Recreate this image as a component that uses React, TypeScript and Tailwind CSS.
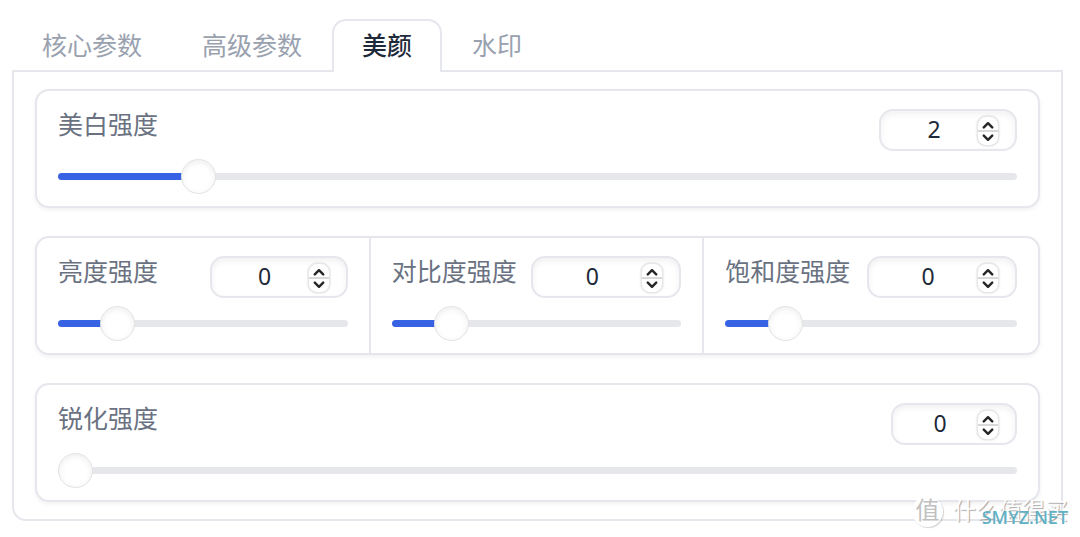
import { useState } from "react";

type ParamProps = {
  id: string;
  label: string;
  min: number;
  max: number;
  initial: number;
  boxClass: string;
};

function Chevron({ down = false }: { down?: boolean }) {
  return (
    <svg viewBox="0 0 12 8" className="h-2 w-3" fill="none" stroke="#262626" strokeWidth="2.4" strokeLinecap="round" strokeLinejoin="round" aria-hidden="true">
      <path d={down ? "M1.8 1.6 6 5.8l4.2-4.2" : "M1.8 6.4 6 2.2l4.2 4.2"} />
    </svg>
  );
}

function Param({ id, label, min, max, initial, boxClass }: ParamProps) {
  const [value, setValue] = useState(initial);
  const set = (next: number) => setValue(Math.min(max, Math.max(min, next)));
  const ratio = (value - min) / (max - min);

  return (
    <div className="min-w-0 px-[21px] pt-[18px] pb-[26px]">
      <div className="flex items-start justify-between">
        <label htmlFor={id} className="text-[25px] leading-7 whitespace-nowrap text-gray-500">
          {label}
        </label>
        <div className={`flex h-[42px] items-center rounded-[14px] border-2 border-[#e6e7ed] bg-white pt-0.5 pr-4 pl-2.5 shadow-[inset_0_3px_6px_rgba(0,0,0,0.06)] ${boxClass}`}>
          <input
            id={id}
            type="number"
            min={min}
            max={max}
            value={value}
            onChange={(e) => set(Number(e.target.value))}
            className="w-0 flex-1 appearance-none bg-transparent pb-1 text-center font-['Noto_Sans',sans-serif] text-[23px] leading-8 text-gray-800 outline-none [-moz-appearance:textfield] [&::-webkit-inner-spin-button]:appearance-none"
          />
          <div className="flex h-[30px] w-[22px] flex-col overflow-hidden rounded-[9px] border border-gray-200 bg-white shadow-[0_0_2px_rgba(0,0,0,0.22)]">
            <button type="button" aria-label={`${label} +`} onClick={() => set(value + 1)} className="flex flex-1 items-center justify-center border-b-2 border-[#d9d9d9] pt-0.5">
              <Chevron />
            </button>
            <button type="button" aria-label={`${label} -`} onClick={() => set(value - 1)} className="flex flex-1 items-center justify-center pb-0.5">
              <Chevron down />
            </button>
          </div>
        </div>
      </div>
      <input
        type="range"
        aria-label={label}
        min={min}
        max={max}
        value={value}
        onChange={(e) => set(Number(e.target.value))}
        style={{
          backgroundImage: `linear-gradient(to right, #3662e3 ${ratio * 100}%, #e5e7eb ${ratio * 100}%)`,
        }}
        className="mt-[22px] block h-[7px] w-full appearance-none rounded-full outline-none [&::-webkit-slider-thumb]:size-[35px] [&::-webkit-slider-thumb]:appearance-none [&::-webkit-slider-thumb]:rounded-full [&::-webkit-slider-thumb]:border [&::-webkit-slider-thumb]:border-[#e2e2e2] [&::-webkit-slider-thumb]:bg-white [&::-webkit-slider-thumb]:shadow-[inset_0_2px_6px_rgba(0,0,0,0.07)]"
      />
    </div>
  );
}

const tabs = ["核心参数", "高级参数", "美颜", "水印"];
const card = "rounded-[14px] border-2 border-[#e6e7ed] bg-white shadow-[0_2px_4px_rgba(0,0,0,0.06)]";

export default function App() {
  const [active, setActive] = useState("美颜");

  return (
    <main className="relative bg-white px-3 pt-[19px] pb-4 font-['Noto_Sans_CJK_SC',sans-serif]">
      <div role="tablist" className="-mb-0.5 flex">
        {tabs.map((tab) => (
          <button
            key={tab}
            type="button"
            role="tab"
            aria-selected={tab === active}
            onClick={() => setActive(tab)}
            className={
              tab === active
                ? "z-10 h-[53px] rounded-t-[14px] border-2 border-b-0 border-[#e6e7ed] bg-white px-7 pb-1.5 text-[25px] leading-8 font-medium text-gray-800"
                : "h-[53px] px-[30px] pb-1 text-[25px] leading-8 text-gray-400"
            }
          >
            {tab}
          </button>
        ))}
      </div>

      <section role="tabpanel" aria-label={active} className="mr-[5px] flex flex-col gap-7 rounded-b-[14px] border-2 border-[#e6e7ed] px-[21px] pt-[17px] pb-[17px]">
        <div className={card}>
          <Param id="whiten" label="美白强度" min={0} max={15} initial={2} boxClass="w-[138px]" />
        </div>
        <div className={`grid grid-cols-3 divide-x-2 divide-[#e6e7ed] ${card}`}>
          <Param id="brightness" label="亮度强度" min={-1} max={5} initial={0} boxClass="w-[138px]" />
          <Param id="contrast" label="对比度强度" min={-1} max={5} initial={0} boxClass="w-[150px]" />
          <Param id="saturation" label="饱和度强度" min={-1} max={5} initial={0} boxClass="w-[150px]" />
        </div>
        <div className={card}>
          <Param id="sharpen" label="锐化强度" min={0} max={10} initial={0} boxClass="w-[126px]" />
        </div>
      </section>

      <div className="pointer-events-none absolute right-3 bottom-[10px] z-20 flex items-center gap-2.5">
        <span className="flex size-[31px] items-center justify-center rounded-full bg-white pb-1 text-[24px] leading-none text-[#c0c0c0] shadow-[1px_1px_1px_rgba(0,0,0,0.18)]">值</span>
        <span className="pb-1 text-[23px] leading-7 text-white [text-shadow:1px_1px_1px_rgba(0,0,0,0.35)]">什么值得买</span>
      </div>
      <span className="pointer-events-none absolute right-3 bottom-2 z-30 font-['Noto_Sans',sans-serif] text-[18px] leading-6 font-medium text-[#5fb0c4]">SMYZ.NET</span>
    </main>
  );
}
